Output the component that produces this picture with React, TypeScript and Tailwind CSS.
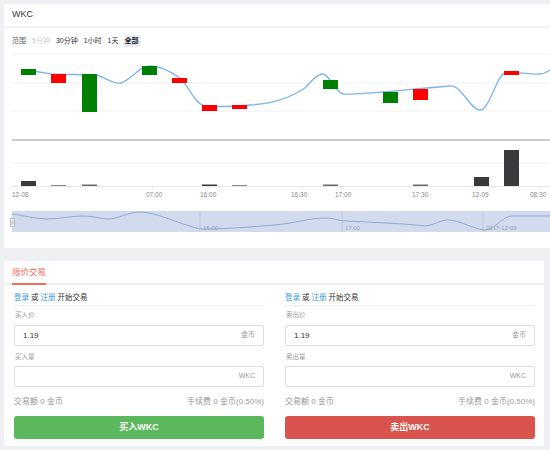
import React from 'react';

const FONT = '"Liberation Sans", "Noto Sans CJK SC", sans-serif';

const RANGES = [
  { label: '5分钟', state: 'disabled' },
  { label: '30分钟', state: 'normal' },
  { label: '1小时', state: 'normal' },
  { label: '1天', state: 'normal' },
  { label: '全部', state: 'active' },
];

// x, width, open-top, bottom, up?
const CANDLES = [
  { x: 21, y: 69, h: 6, up: false },
  { x: 51, y: 74, h: 9, up: true },
  { x: 82, y: 74, h: 38, up: false },
  { x: 142, y: 66, h: 9, up: false },
  { x: 172, y: 78, h: 5, up: true },
  { x: 202, y: 105, h: 6, up: true },
  { x: 232, y: 105, h: 4, up: true },
  { x: 323, y: 80, h: 9, up: false },
  { x: 383, y: 92, h: 11, up: false },
  { x: 413, y: 89, h: 11, up: true },
  { x: 504, y: 71, h: 4, up: true },
];

const VOLUMES = [
  { x: 21, h: 5, c: '#3a3a3c' },
  { x: 51, h: 1, c: '#8a8a8a' },
  { x: 82, h: 1.5, c: '#6a6a6a' },
  { x: 202, h: 1.5, c: '#3a3a3c' },
  { x: 232, h: 1, c: '#8a8a8a' },
  { x: 323, h: 1.5, c: '#6a6a6a' },
  { x: 413, h: 1.5, c: '#6a6a6a' },
  { x: 474, h: 9, c: '#3a3a3c' },
  { x: 504, h: 36, c: '#3a3a3c' },
];

const X_LABELS = [
  { x: 12, t: '12-08' },
  { x: 146, t: '07:00' },
  { x: 200, t: '16:00' },
  { x: 291, t: '16:30' },
  { x: 335, t: '17:00' },
  { x: 412, t: '17:30' },
  { x: 472, t: '12-09' },
  { x: 530, t: '08:30' },
];

const Chart = () => (
  <svg width={546} height={194} viewBox="4 48 546 194" className="block">
    {[54, 83, 111, 163].map((y) => (
      <line key={y} x1={12} x2={550} y1={y} y2={y} stroke="#f0f0f0" strokeWidth={1} />
    ))}
    <line x1={12} x2={550} y1={140} y2={140} stroke="#cccccc" strokeWidth={2} />
    <line x1={12} x2={550} y1={186.5} y2={186.5} stroke="#e4e6ec" strokeWidth={1} />
    {[153, 208, 302, 342, 418, 478, 539].map((x) => (
      <line key={x} x1={x} x2={x} y1={187} y2={190} stroke="#e4e6ec" strokeWidth={1} />
    ))}
    {X_LABELS.map((l) => (
      <text key={l.t} x={l.x} y={197} fontSize={6.5} fill="#8a8a8a" fontFamily={FONT}>
        {l.t}
      </text>
    ))}
    {VOLUMES.map((v) => (
      <rect key={v.x} x={v.x} y={186 - v.h} width={15} height={v.h} fill={v.c} />
    ))}
    <path
      d="M21,70 C30,70 40,72 51,74 C60,75 80,74 96,75 C105,77 112,84 120,83 C130,82 138,66 150,66 C160,66 170,71 180,78 C190,88 195,104 205,106 C220,107 240,106 250,105 C270,104 290,98 305,88 C312,80 318,74 322,74 C330,74 335,92 343,94 C360,95 400,90 450,86 C462,85 470,110 480,110 C490,110 497,72 507,72 C520,72 530,75 540,74 C545,74 548,71 550,70"
      fill="none"
      stroke="#7cb5ec"
      strokeWidth={1.3}
    />
    {CANDLES.map((c) => (
      <rect key={c.x} x={c.x} y={c.y} width={15} height={c.h} fill={c.up ? '#ff0000' : '#008000'} />
    ))}
    <rect x={12} y={211} width={538} height={21} fill="#d2dbee" />
    {[200, 342, 483].map((x) => (
      <line key={x} x1={x} x2={x} y1={211} y2={232} stroke="#bcc8e2" strokeWidth={1} />
    ))}
    <path
      d="M12,214 C22,215 35,219 47,219 C60,219 70,216 82,216 C95,216 100,219 108,219 C118,219 128,212 140,212 C155,212 175,222 190,226 C198,229 200,229 205,229 C225,229 250,227 275,225 C295,223 310,218 325,218 C335,218 338,221 347,221 C360,222 400,223 425,226 C435,225 440,220 448,220 C460,220 475,230 485,230 C495,230 502,216 512,216 L550,216"
      fill="none"
      stroke="#90a9d8"
      strokeWidth={1}
    />
    <text x={203} y={230} fontSize={6} fill="#9aa3b5" fontFamily={FONT}>16:00</text>
    <text x={345} y={230} fontSize={6} fill="#9aa3b5" fontFamily={FONT}>17:00</text>
    <text x={486} y={230} fontSize={6} fill="#9aa3b5" fontFamily={FONT}>2017-12-09</text>
    <rect x={10.5} y={218.5} width={4} height={8} fill="#f2f2f2" stroke="#999" strokeWidth={0.6} />
    <line x1={12} x2={12} y1={220.5} y2={224.5} stroke="#999" strokeWidth={0.5} />
    <line x1={13} x2={13} y1={220.5} y2={224.5} stroke="#999" strokeWidth={0.5} />
  </svg>
);

type SideProps = {
  priceLabel: string;
  amountLabel: string;
  button: string;
  buttonClass: string;
};

const TradeSide = ({ priceLabel, amountLabel, button, buttonClass }: SideProps) => (
  <div className="flex flex-col w-[250px]">
    <div className="h-[16px] flex items-center border-b border-[#eeeeee] text-[7.5px] text-[#333] gap-[2px]">
      <span className="text-[#3a9ad9]">登录</span>
      <span>或</span>
      <span className="text-[#3a9ad9]">注册</span>
      <span>开始交易</span>
    </div>
    <div className="mt-[4px] h-[10px] flex items-center pl-[1px] text-[6.5px] text-[#999]">{priceLabel}</div>
    <div className="mt-[5px] h-[21px] flex items-center justify-between border border-[#dcdcdc] rounded-[2px] px-[8px]">
      <span className="text-[8px] text-[#333]">1.19</span>
      <span className="text-[7px] text-[#999]">金币</span>
    </div>
    <div className="mt-[6px] h-[10px] flex items-center pl-[1px] text-[6.5px] text-[#999]">{amountLabel}</div>
    <div className="mt-[4px] h-[21px] flex items-center justify-end border border-[#dcdcdc] rounded-[2px] px-[8px]">
      <span className="text-[7px] text-[#999]">WKC</span>
    </div>
    <div className="mt-[9px] h-[12px] flex items-center justify-between text-[8px] text-[#999]">
      <span>交易额 0 金币</span>
      <span>手续费 0 金币(0.50%)</span>
    </div>
    <button
      className={`mt-[8px] h-[23px] rounded-[3px] text-white text-[9px] font-semibold flex items-center justify-center ${buttonClass}`}
    >
      {button}
    </button>
  </div>
);

export default function App() {
  return (
    <div className="w-[550px] h-[450px] overflow-hidden bg-[#eff0f4] pt-[4px]" style={{ fontFamily: FONT }}>
      <div className="ml-[4px] w-[546px] bg-white pb-[6px]">
        <div className="h-[22px] flex items-center pl-[8px] text-[9px] text-[#333] border-b-2 border-[#f2f3f6] box-content">
          WKC
        </div>
        <div className="mt-[6px] h-[14px] flex items-center pl-[8px] gap-[4px] text-[7px]">
          <span className="text-[#666] mr-[1px]">范围</span>
          {RANGES.map((r) => (
            <span
              key={r.label}
              className={
                r.state === 'disabled'
                  ? 'text-[#cccccc] px-[1px]'
                  : r.state === 'active'
                    ? 'text-[#222] font-bold bg-[#e6ebf5] px-[1px] py-[1px]'
                    : 'text-[#333] px-[1px]'
              }
            >
              {r.label}
            </span>
          ))}
        </div>
        <Chart />
      </div>

      <div className="ml-[4px] mt-[13px] w-[540px] bg-white pb-[7px]">
        <div className="h-[24px] flex items-end pl-[8px] border-b-2 border-[#eeeeee]">
          <div className="h-[24px] -mb-[2px] flex items-center border-b-2 border-[#f36c5a] text-[8.5px] text-[#f36c5a]">
            限价交易
          </div>
        </div>
        <div className="pt-[5px] pl-[10px] flex gap-[21px]">
          <TradeSide priceLabel="买入价" amountLabel="买入量" button="买入WKC" buttonClass="bg-[#5cb85c]" />
          <TradeSide priceLabel="卖出价" amountLabel="卖出量" button="卖出WKC" buttonClass="bg-[#d9534f]" />
        </div>
      </div>
    </div>
  );
}
